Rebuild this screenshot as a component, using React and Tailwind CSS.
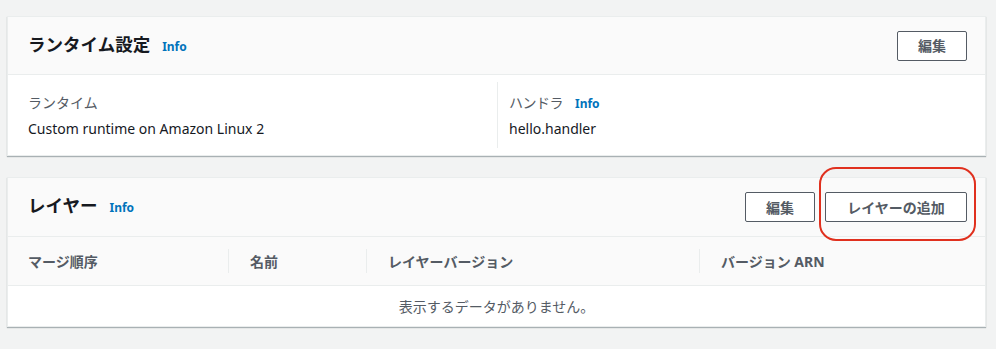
import React from 'react';

const font = { fontFamily: '"Noto Sans", "Noto Sans CJK JP", sans-serif' };

function Info() {
  return <span className="ml-3 text-[12px] font-bold text-[#0073bb]">Info</span>;
}

function Button({ children, className = '' }) {
  return (
    <button
      className={`h-[30px] rounded-[2px] border border-[#545b64] bg-white text-[14px] font-bold text-[#545b64] ${className}`}
    >
      {children}
    </button>
  );
}

export default function App() {
  const columns = [
    { label: 'マージ順序', w: 'w-[201px]' },
    { label: '名前', w: 'w-[138px]' },
    { label: 'レイヤーバージョン', w: 'w-[333px]' },
    { label: 'バージョン ARN', w: 'flex-1' },
  ];

  return (
    <div style={font} className="min-h-[349px] bg-[#f2f3f3] pl-[7px] pr-[10px] pt-[16px] text-[#16191f]">
      {/* runtime settings */}
      <div className="border border-[#eaeded] bg-white shadow-[0_1px_1px_0_rgba(0,28,36,0.3)]">
        <div className="flex h-[58px] items-center justify-between border-b border-[#eaeded] bg-[#fafafa] pl-5 pr-[18px]">
          <div className="flex items-baseline">
            <h2 className="text-[17.5px] font-bold leading-none">ランタイム設定</h2>
            <Info />
          </div>
          <Button className="w-[70px]">編集</Button>
        </div>
        <div className="flex h-[80px] items-center pl-5">
          <div className="flex h-[66px] w-[470px] flex-col justify-center border-r border-[#eaeded]">
            <div className="text-[14px] text-[#545b64]">ランタイム</div>
            <div className="mt-[5px] text-[14px]">Custom runtime on Amazon Linux 2</div>
          </div>
          <div className="flex h-[66px] flex-col justify-center pl-[11px]">
            <div className="flex items-baseline text-[14px] text-[#545b64]">
              <span className="tracking-[-0.5px]">ハンドラ</span>
              <Info />
            </div>
            <div className="mt-[5px] text-[14px]">hello.handler</div>
          </div>
        </div>
      </div>

      {/* layers */}
      <div className="mt-[21px] border border-[#eaeded] bg-white shadow-[0_1px_1px_0_rgba(0,28,36,0.3)]">
        <div className="flex h-[59px] items-center justify-between border-b border-[#eaeded] bg-[#fafafa] pl-5 pr-[18px]">
          <div className="flex items-baseline">
            <h2 className="text-[17.5px] font-bold leading-none">レイヤー</h2>
            <Info />
          </div>
          <div className="flex items-center gap-[10px]">
            <Button className="w-[70px]">編集</Button>
            <div className="relative">
              <Button className="w-[142px]">レイヤーの追加</Button>
              <div className="pointer-events-none absolute -left-[6px] -right-[9px] -top-[25px] -bottom-[19px] rounded-[17px] border-2 border-[#e0301e]" />
            </div>
          </div>
        </div>
        <div className="flex h-[49px] items-center border-b border-[#eaeded] bg-[#fafafa] pl-5">
          {columns.map((c, i) => (
            <div key={c.label} className={`flex h-[24px] items-center ${c.w} ${i < 3 ? 'border-r border-[#eaeded]' : ''} ${i > 0 ? 'pl-[21px]' : ''}`}>
              <span className="text-[14px] font-bold text-[#545b64]">{c.label}</span>
            </div>
          ))}
        </div>
        <div className="flex h-[40px] items-center justify-center text-[14px] text-[#545b64]">
          表示するデータがありません。
        </div>
      </div>
    </div>
  );
}
